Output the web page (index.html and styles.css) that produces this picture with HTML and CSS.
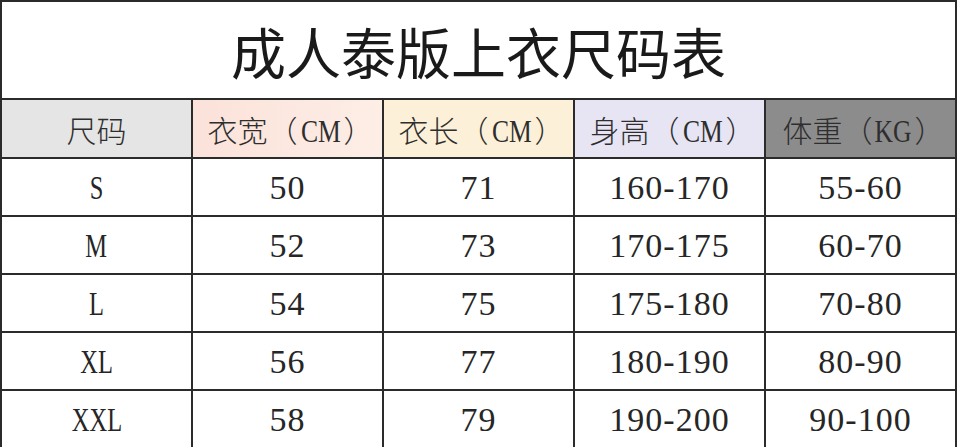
FILE: index.html
```html
<!DOCTYPE html>
<html lang="zh-CN">
<head>
<meta charset="utf-8">
<title>成人泰版上衣尺码表</title>
<link rel="stylesheet" href="styles.css">
</head>
<body>
<table class="size-table">
  <colgroup>
    <col class="col"><col class="col"><col class="col"><col class="col"><col class="col">
  </colgroup>
  <tr class="title-row">
    <td colspan="5" class="title">成人泰版上衣尺码表</td>
  </tr>
  <tr class="head-row">
    <th class="h-size">尺码</th>
    <th class="h-width">衣宽（<span class="lat">CM</span>）</th>
    <th class="h-length">衣长（<span class="lat">CM</span>）</th>
    <th class="h-height">身高（<span class="lat">CM</span>）</th>
    <th class="h-weight">体重（<span class="lat">KG</span>）</th>
  </tr>
  <tr class="row"><td><span class="sz">S</span></td><td>50</td><td>71</td><td>160-170</td><td>55-60</td></tr>
  <tr class="row"><td><span class="sz">M</span></td><td>52</td><td>73</td><td>170-175</td><td>60-70</td></tr>
  <tr class="row"><td><span class="sz">L</span></td><td>54</td><td>75</td><td>175-180</td><td>70-80</td></tr>
  <tr class="row"><td><span class="sz">XL</span></td><td>56</td><td>77</td><td>180-190</td><td>80-90</td></tr>
  <tr class="row"><td><span class="sz">XXL</span></td><td>58</td><td>79</td><td>190-200</td><td>90-100</td></tr>
</table>
</body>
</html>
```

FILE: styles.css
```css
html, body {
  margin: 0;
  padding: 0;
  background: #ffffff;
}

.size-table {
  width: 957px;
  height: 447px;
  border-collapse: collapse;
  table-layout: fixed;
  font-family: "Liberation Serif", "Noto Sans CJK SC", serif;
  color: #262626;
}

.col {
  width: 20%;
}

.size-table td,
.size-table th {
  border: 2px solid #2b2b2b;
  text-align: center;
  vertical-align: middle;
  padding: 0;
  font-weight: normal;
}

.title-row {
  height: 98px;
}

.title {
  font-family: "Noto Sans CJK SC", sans-serif;
  font-weight: 300;
  font-size: 55px;
  color: #1a1a1a;
  padding-top: 8px;
  background: #ffffff;
}

.head-row {
  height: 59px;
}

.head-row th {
  font-family: "Noto Sans CJK SC", sans-serif;
  font-weight: 300;
  font-size: 30px;
  color: #2e2e2e;
  padding-left: 6px;
}

.head-row th.h-size {
  padding-left: 0;
}

.lat {
  display: inline-block;
  font-family: "Liberation Serif", serif;
  font-size: 32px;
  transform: scaleX(0.8);
  margin: 0 -2px;
}

.h-size { background: #e5e5e5; }
.h-width { background: linear-gradient(90deg, #fbe2da, #fdeee6); }
.h-length { background: #fcf1d8; }
.h-height { background: #e7e5f3; }
.h-weight { background: #8c8c8c; color: #1e1e1e; }

.row {
  height: 58px;
}

.row td {
  font-size: 34px;
  letter-spacing: 1px;
  background: #ffffff;
  padding-top: 2px;
}

.sz {
  display: inline-block;
  font-size: 34px;
  letter-spacing: 0;
  transform: scaleX(0.72);
}
```
